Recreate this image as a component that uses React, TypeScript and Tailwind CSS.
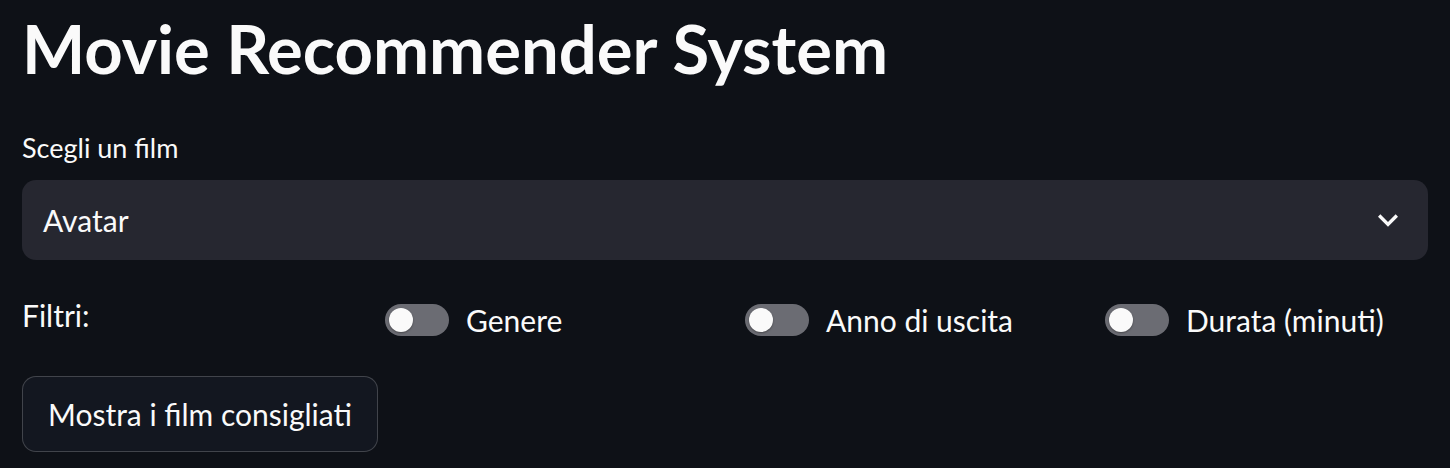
import { useState } from "react";

const FILTERS = ["Genere", "Anno di uscita", "Durata (minuti)"];

function Toggle({ label }: { label: string }) {
  const [on, setOn] = useState(false);
  return (
    <button
      onClick={() => setOn((v) => !v)}
      className="flex h-[50px] items-center gap-[17px] pl-[3px] text-left"
    >
      <span
        className={`flex h-[32px] w-[64px] shrink-0 items-center rounded-full px-[4px] ${
          on ? "justify-end bg-[#ff4b4b]" : "justify-start bg-[#6b6c73]"
        }`}
      >
        <span className="h-[24px] w-[24px] rounded-full bg-[#fafafa] shadow-[0_1px_2px_rgba(0,0,0,0.35)]" />
      </span>
      <span className="text-[30px] leading-[40px]">{label}</span>
    </button>
  );
}

export default function App() {
  return (
    <div
      className="min-h-screen bg-[#0e1117] px-[22px] text-[#fafafa]"
      style={{ fontFamily: "Lato, 'Noto Sans', sans-serif" }}
    >
      <h1 className="pt-[8px] text-[67px] font-bold leading-[80px]">
        Movie Recommender System
      </h1>

      <label className="mt-[44px] block text-[27px] leading-[32px]">
        Scegli un film
      </label>
      <div className="mt-[16px] flex h-[80px] items-center justify-between rounded-[14px] bg-[#262730] pl-[21px] pr-[20px]">
        <span className="text-[30px]">Avatar</span>
        <svg width="40" height="40" viewBox="0 0 24 24" fill="#fafafa">
          <path d="M16.59 8.59L12 13.17 7.41 8.59 6 10l6 6 6-6z" />
        </svg>
      </div>

      <div className="mt-[35px] grid grid-cols-4 gap-x-[34px]">
        <div className="text-[30px] leading-[40px]">Filtri:</div>
        {FILTERS.map((f) => (
          <Toggle key={f} label={f} />
        ))}
      </div>

      <button className="mt-[31px] flex h-[76px] w-[356px] items-center justify-center rounded-[14px] border border-[#fafafa]/20 bg-[#131720] text-[30px]">
        Mostra i film consigliati
      </button>
    </div>
  );
}
